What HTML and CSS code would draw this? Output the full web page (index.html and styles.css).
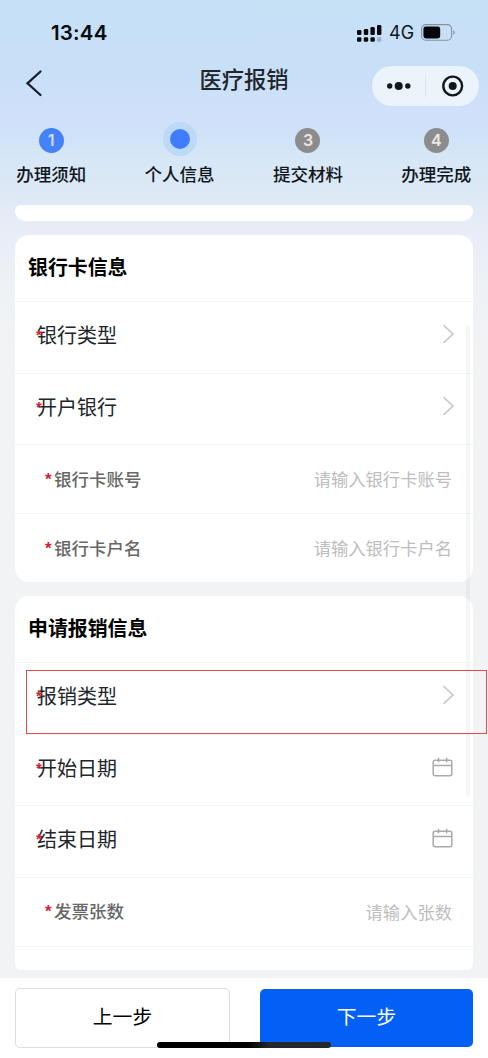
FILE: index.html
```html
<!DOCTYPE html>
<html lang="zh-CN">
<head>
<meta charset="utf-8">
<title>医疗报销</title>
<link rel="stylesheet" href="styles.css">
</head>
<body>
<div class="app">
  <header class="status">
    <span class="time">13:44</span>
    <div class="status-icons">
      <svg class="signal" width="26" height="18" viewBox="0 0 26 18">
        <g fill="#05090f">
          <rect x="0" y="6" width="4.4" height="5" rx="1.3"/>
          <rect x="6.8" y="5" width="4.4" height="6" rx="1.3"/>
          <rect x="13.4" y="3" width="4.4" height="8" rx="1.3"/>
          <rect x="20" y="1" width="4.4" height="10" rx="1.3"/>
          <rect x="0" y="13.2" width="4.4" height="4.6" rx="1.3"/>
          <rect x="6.8" y="13.2" width="4.4" height="4.6" rx="1.3"/>
          <rect x="13.4" y="13.2" width="4.4" height="4.6" rx="1.3"/>
        </g>
        <rect x="20" y="13.2" width="4.4" height="4.6" rx="1.3" fill="#a0b2c4"/>
      </svg>
      <span class="network">4G</span>
      <svg class="battery" width="34" height="17" viewBox="0 0 34 17">
        <rect x=".6" y=".6" width="30" height="15.6" rx="4.2" fill="none" stroke="#8193a3" stroke-width="1.1"/>
        <rect x="2.4" y="2.5" width="16.8" height="12" rx="2.4" fill="#03070c"/>
        <path d="M32.3 6v5q1.3-.8 1.3-2.5T32.3 6Z" fill="#8193a3"/>
      </svg>
    </div>
  </header>
  <nav class="navbar">
    <svg class="back" width="18" height="28" viewBox="0 0 18 28"><path d="M15.5 2.500 2.500 14.300 15.500 26" fill="none" stroke="#182029" stroke-width="2.300" stroke-linecap="round"/></svg>
    <h1 class="title">医疗报销</h1>
    <div class="capsule">
      <svg width="107" height="40" viewBox="0 0 107 40">
        <g fill="#11171d"><circle cx="17.700" cy="20" r="2.700"/><circle cx="26.700" cy="20" r="4"/><circle cx="35.800" cy="20" r="2.700"/><circle cx="80.700" cy="20" r="4"/></g>
        <path d="M53.500 9v22" stroke="#dce4ee"/>
        <circle cx="80.700" cy="20" r="9.400" fill="none" stroke="#11171d" stroke-width="2.400"/>
      </svg>
    </div>
  </nav>
  <ol class="steps">
    <li class="step"><span class="dot done">1</span><span class="step-label">办理须知</span></li>
    <li class="step"><span class="dot active"></span><span class="step-label">个人信息</span></li>
    <li class="step"><span class="dot">3</span><span class="step-label">提交材料</span></li>
    <li class="step"><span class="dot">4</span><span class="step-label">办理完成</span></li>
  </ol>
  <main class="content">
    <section class="card card-end"></section>
    <section class="card bank">
      <h2 class="heading">银行卡信息</h2>
      <div class="row"><span class="label"><i class="req">*</i>银行类型</span><svg class="chevron" width="13" height="20" viewBox="0 0 13 20"><path d="M1.500 1.200 11 10 1.500 18.800"/></svg></div>
      <div class="row"><span class="label"><i class="req">*</i>开户银行</span><svg class="chevron" width="13" height="20" viewBox="0 0 13 20"><path d="M1.500 1.200 11 10 1.500 18.800"/></svg></div>
      <div class="row input"><span class="label"><i class="req">*</i>银行卡账号</span><span class="hint">请输入银行卡账号</span></div>
      <div class="row input"><span class="label"><i class="req">*</i>银行卡户名</span><span class="hint">请输入银行卡户名</span></div>
    </section>
    <section class="card claim">
      <h2 class="heading">申请报销信息</h2>
      <div class="row marked"><span class="label"><i class="req">*</i>报销类型</span><svg class="chevron" width="13" height="20" viewBox="0 0 13 20"><path d="M1.500 1.200 11 10 1.500 18.800"/></svg></div>
      <div class="row"><span class="label"><i class="req">*</i>开始日期</span><svg class="calendar" width="21" height="20" viewBox="0 0 21 20"><path d="M3.200 3.200h14.600q2 0 2 2v11.600q0 2-2 2H3.200q-2 0-2-2V5.200q0-2 2-2ZM1.200 8.500h18.600M6.500 .8v4.500M14.700 .8v4.500"/></svg></div>
      <div class="row"><span class="label"><i class="req">*</i>结束日期</span><svg class="calendar" width="21" height="20" viewBox="0 0 21 20"><path d="M3.200 3.200h14.600q2 0 2 2v11.600q0 2-2 2H3.200q-2 0-2-2V5.200q0-2 2-2ZM1.200 8.500h18.600M6.500 .8v4.500M14.700 .8v4.500"/></svg></div>
      <div class="row input"><span class="label"><i class="req">*</i>发票张数</span><span class="hint">请输入张数</span></div>
      <div class="row-cut"></div>
    </section>
  </main>
  <footer class="footer">
    <button class="btn prev">上一步</button>
    <button class="btn next">下一步</button>
  </footer>
  <div class="scrollbar"></div>
  <div class="home-bar"></div>
</div>
</body>
</html>
```
FILE: styles.css
```css
* { box-sizing: border-box; }
body { margin: 0; }
.app {
  position: relative;
  width: 488px;
  height: 1058px;
  overflow: hidden;
  display: flex;
  flex-direction: column;
  font-family: "Noto Sans CJK SC", sans-serif;
  color: #22262a;
  background: #f2f3f5 linear-gradient(#c6e0f6 0, #c8e0f7 75px, #d0e0fa 112px, #cfe2f8 135px, #d7e7f6 160px, #dce8f5 190px, #e7edf7 225px, #e9edf8 245px, #edf2f6 285px, #f2f3f5 340px) no-repeat;
}
.status {
  height: 65px;
  padding: 0 33px 0 51px;
  display: flex;
  align-items: center;
  justify-content: space-between;
}
.time { font: 600 20.500px/24px Inter, sans-serif; color: #060b12; letter-spacing: .2px; }
.status-icons { display: flex; align-items: center; }
.signal { margin-right: 6px; }
.network { font: 400 18px/22px Inter, sans-serif; color: #10161c; width: 32px; }
.navbar {
  height: 55px;
  padding: 0 9px 0 25px;
  display: grid;
  grid-template-columns: 108px 1fr 108px;
  align-items: start;
}
.back { margin-top: 4px; }
.title { margin: 0; font-size: 22.300px; line-height: 26px; font-weight: 500; text-align: center; white-space: nowrap; transform: translateX(-8px); }
.capsule { height: 40px; border-radius: 20px; background: #ebf3fb; margin: 1px 0 0 1px; }
.capsule svg { display: block; }
.steps {
  list-style: none;
  height: 85px;
  margin: 0 0 0 -13px;
  padding: 0;
  display: grid;
  grid-template-columns: repeat(4, 128.400px);
}
.step { display: flex; flex-direction: column; align-items: center; gap: 8px; padding-top: 8px; }
.dot {
  width: 25px;
  height: 25px;
  border-radius: 50%;
  background: #8c8c8c;
  color: #eee6e4;
  font: 600 16px/25px Inter, sans-serif;
  text-align: center;
}
.dot.done { background: #4581fa; color: #cbe1f8; }
.dot.active {
  width: 20px;
  height: 20px;
  margin: 1px 0 4px;
  background: #407cfd;
  box-shadow: 0 0 0 7px #bcdaf5;
}
.step-label { font-size: 17.500px; line-height: 26px; font-weight: 500; color: #10161c; }
.content { height: 773px; padding: 0 15px; }
.card { background: #fff; border-radius: 14px; }
.card-end { height: 16px; border-radius: 7px 7px 14px 14px; margin-bottom: 14px; }
.bank { height: 347px; margin-bottom: 14px; }
.claim { border-radius: 14px 14px 6px 6px; }
.heading { margin: 0; height: 66px; padding: 0 13px; font-size: 19.900px; line-height: 63px; font-weight: 700; color: #000; }
.row {
  position: relative;
  height: 71.500px;
  border-top: 1px solid #f3f4f5;
  padding: 0 19px 4px 22px;
  display: flex;
  align-items: center;
  justify-content: space-between;
}
.label { position: relative; font-size: 20px; line-height: 30px; }
.req {
  position: absolute;
  left: -1px;
  top: 0;
  color: #d32236;
  font: 700 15px/30px "Liberation Sans", sans-serif;
}
.row.input { height: 69px; padding: 0 21px 1px 39px; }
.input .label { font-size: 17.500px; font-weight: 500; color: #676767; }
.input .req { left: -9px; top: 1px; font-size: 17px; }
.hint { font-size: 17.300px; color: #bdbdbd; }
.chevron { margin: 0 -1px 2px 0; }
.chevron path { fill: none; stroke: #ccc; stroke-width: 1.800; }
.calendar { margin: 0 1px 2px 0; }
.calendar path { fill: none; stroke: #aaa; stroke-width: 1.500; }
.marked { z-index: 1; }
.marked::after {
  content: "";
  position: absolute;
  left: 11px;
  right: -14px;
  top: 7px;
  height: 62px;
  border: 1px solid #e04c4c;
}
.row-cut { height: 24px; border-top: 1px solid #f3f4f5; }
.footer {
  height: 80px;
  padding: 10px 15px;
  background: #fff;
  display: grid;
  grid-template-columns: 215px 213px;
  justify-content: space-between;
  align-items: start;
}
.btn {
  height: 60px;
  border-radius: 5px;
  border: 1px solid #dcdddf;
  background: #fff;
  color: #000;
  padding: 0 0 4px;
  font: 400 19.800px/54px "Noto Sans CJK SC", sans-serif;
}
.btn.next { height: 58px; margin-top: 1px; border: 0; background: #0360f6; color: #fff; }
.scrollbar { position: absolute; left: 466px; top: 325px; width: 4px; height: 472px; border-radius: 2px; background: rgba(0, 0, 0, .035); }
.home-bar { position: absolute; left: 157px; top: 1042px; width: 174px; height: 6px; border-radius: 3px; background: linear-gradient(90deg, #000 52%, #25272b 65%); }
```
